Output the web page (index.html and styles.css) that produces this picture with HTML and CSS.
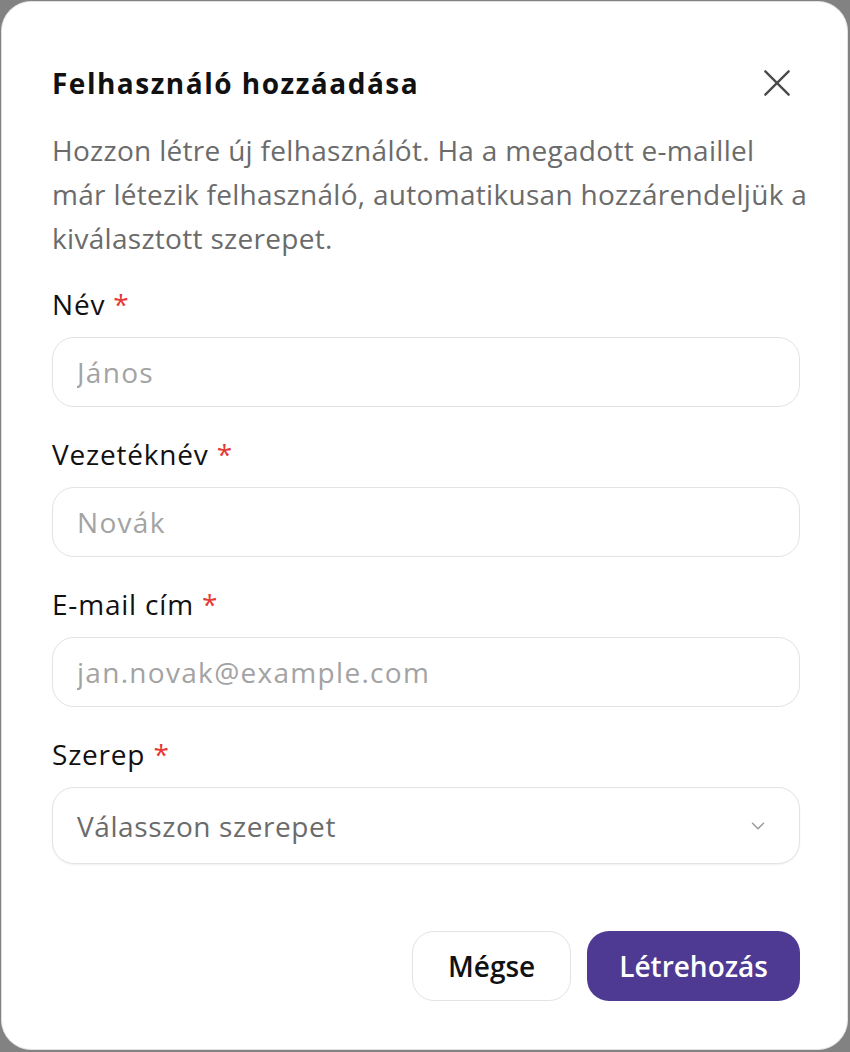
FILE: index.html
```html
<!DOCTYPE html>
<html lang="hu">
<head>
    <meta charset="UTF-8">
    <meta name="viewport" content="width=device-width, initial-scale=1.0">
    <title>Felhasználó hozzáadása</title>
    <link rel="stylesheet" href="styles.css">
</head>
<body>

    <div class="dialog">
        <div class="dialog-header">
            <h2 class="dialog-title">Felhasználó hozzáadása</h2>
            <button class="close-btn" aria-label="Bezárás">
                <svg width="28" height="28" viewBox="0 0 24 24" fill="none" stroke="#4a4a4a" stroke-width="2" stroke-linecap="round">
                    <path d="M2 2 L22 22 M22 2 L2 22"/>
                </svg>
            </button>
        </div>
        <p class="dialog-desc">Hozzon létre új felhasználót. Ha a megadott e-maillel<br>
            már létezik felhasználó, automatikusan hozzárendeljük a<br>
            kiválasztott szerepet.</p>

        <form class="form">
            <div class="field">
                <label>Név <span class="req">*</span></label>
                <input type="text" class="input" placeholder="János">
            </div>
            <div class="field">
                <label>Vezetéknév <span class="req">*</span></label>
                <input type="text" class="input" placeholder="Novák">
            </div>
            <div class="field">
                <label>E-mail cím <span class="req">*</span></label>
                <input type="email" class="input" placeholder="jan.novak@example.com">
            </div>
            <div class="field">
                <label>Szerep <span class="req">*</span></label>
                <div class="select">
                    <span>Válasszon szerepet</span>
                    <svg width="22" height="22" viewBox="0 0 24 24" fill="none" stroke="#9a9a9a" stroke-width="1.6" stroke-linecap="round" stroke-linejoin="round">
                        <path d="M6 9 L12 15 L18 9"/>
                    </svg>
                </div>
            </div>
        </form>

        <div class="actions">
            <button class="btn btn-cancel">Mégse</button>
            <button class="btn btn-primary">Létrehozás</button>
        </div>
    </div>

</body>
</html>
```

FILE: styles.css
```css
html, body { height: 100%; }

body {
    margin: 0;
    background: #828282;
    font-family: "Open Sans", "Noto Sans", sans-serif;
    color: #111;
}

.dialog {
    box-sizing: border-box;
    height: 1049px;
    margin: 1px 2px 0 1px;
    background: #fff;
    border: 1px solid #e2e2e2;
    border-radius: 30px;
    padding: 63px 47px 0 50px;
}

.dialog-header {
    display: flex;
    align-items: center;
    justify-content: space-between;
}

.dialog-title {
    margin: 0;
    font-size: 28px;
    line-height: 36px;
    font-weight: 700;
    letter-spacing: 1.5px;
}

.close-btn {
    border: none;
    background: none;
    padding: 0;
    margin-right: 9px;
    display: flex;
    cursor: pointer;
}

.dialog-desc {
    margin: 27px 0 0;
    font-size: 28px;
    line-height: 44px;
    letter-spacing: 0.3px;
    white-space: nowrap;
    color: #6b6b6b;
}

.form {
    margin-top: 27px;
    display: flex;
    flex-direction: column;
    gap: 30px;
}

.field label {
    display: block;
    font-size: 28px;
    line-height: 34px;
    font-weight: 500;
    letter-spacing: 0.8px;
    margin-bottom: 16px;
}

.req { color: #e53935; }

.input, .select {
    box-sizing: border-box;
    width: 100%;
    height: 70px;
    border: 1.5px solid #e3e3e3;
    border-radius: 22px;
    padding: 0 24px;
    font-family: inherit;
    font-size: 28px;
    letter-spacing: 1.3px;
    background: #fff;
    color: #111;
    outline: none;
}

.input::placeholder { color: #a3a3a3; }

.select {
    height: 77px;
    display: flex;
    align-items: center;
    justify-content: space-between;
    color: #6b6b6b;
    letter-spacing: 0.6px;
    box-shadow: 0 1px 2px rgba(0, 0, 0, 0.06);
    padding-right: 30px;
}

.actions {
    margin-top: 67px;
    display: flex;
    justify-content: flex-end;
    gap: 16px;
}

.btn {
    height: 70px;
    border-radius: 22px;
    padding: 0 32px;
    font-family: inherit;
    font-size: 28px;
    font-weight: 600;
    cursor: pointer;
}

.btn-cancel {
    background: #fff;
    color: #111;
    border: 1.5px solid #e3e3e3;
    padding: 0 35px;
}

.btn-primary {
    background: #4e3a93;
    color: #fff;
    border: none;
}
```
